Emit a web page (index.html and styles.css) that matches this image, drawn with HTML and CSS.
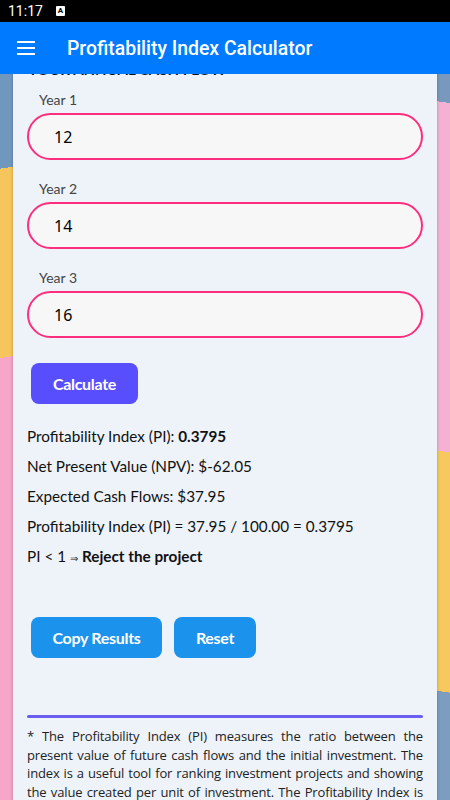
FILE: index.html
```html
<!DOCTYPE html>
<html lang="en">
<head>
  <meta charset="UTF-8">
  <meta name="viewport" content="width=device-width, initial-scale=1.0">
  <title>Profitability Index Calculator</title>
  <link rel="stylesheet" href="styles.css">
</head>
<body>
  <div class="status-bar">
    <span class="clock">11:17</span>
    <span class="status-icon">A</span>
  </div>

  <header class="app-bar">
    <button class="menu-button" title="Menu">
      <span></span><span></span><span></span>
    </button>
    <h1>Profitability Index Calculator</h1>
  </header>

  <main class="screen">
    <div class="card">
      <h2 class="section-title">YOUR ANNUAL CASH FLOW</h2>

      <div class="field">
        <label for="year-1">Year 1</label>
        <input type="text" id="year-1" value="12">
      </div>

      <div class="field">
        <label for="year-2">Year 2</label>
        <input type="text" id="year-2" value="14">
      </div>

      <div class="field">
        <label for="year-3">Year 3</label>
        <input type="text" id="year-3" value="16">
      </div>

      <button class="btn btn-primary" id="calculate">Calculate</button>

      <div class="results">
        <p>Profitability Index (PI): <strong>0.3795</strong></p>
        <p>Net Present Value (NPV): $-62.05</p>
        <p>Expected Cash Flows: $37.95</p>
        <p>Profitability Index (PI) = 37.95 / 100.00 = 0.3795</p>
        <p>PI &lt; 1 <span class="arrow">&rArr;</span> <strong>Reject the project</strong></p>
      </div>

      <div class="actions">
        <button class="btn btn-secondary" id="copy-results">Copy Results</button>
        <button class="btn btn-secondary" id="reset">Reset</button>
      </div>

      <hr class="divider">

      <p class="note">
        * The Profitability Index (PI) measures the ratio between the present value of future
        cash flows and the initial investment. The index is a useful tool for ranking investment
        projects and showing the value created per unit of investment. The Profitability Index is
        also known as the value investment ratio or the profit investment ratio.
      </p>
    </div>
  </main>
</body>
</html>
```

FILE: styles.css
```css
* {
  box-sizing: border-box;
}

html, body {
  margin: 0;
  height: 100%;
}

body {
  font-family: Lato, 'Noto Sans', sans-serif;
  color: #111;
  display: flex;
  flex-direction: column;
  overflow: hidden;
}

.status-bar {
  height: 22px;
  background-color: #000;
  color: #fff;
  display: flex;
  align-items: center;
  gap: 13px;
  padding-left: 8px;
  font-family: Roboto, sans-serif;
  font-size: 14px;
}

.status-icon {
  width: 9px;
  height: 10px;
  background-color: #fff;
  color: #000;
  border-radius: 1px;
  font-size: 8px;
  font-weight: bold;
  line-height: 10px;
  text-align: center;
}

.app-bar {
  height: 52px;
  background-color: #007bff;
  color: #fff;
  display: flex;
  align-items: center;
  padding-left: 17px;
  position: relative;
  z-index: 1;
}

.menu-button {
  background: none;
  border: none;
  padding: 0;
  width: 18px;
  height: 14px;
  display: flex;
  flex-direction: column;
  justify-content: space-between;
  cursor: pointer;
}

.menu-button span {
  display: block;
  height: 2px;
  background-color: #fff;
}

.app-bar h1 {
  margin: 0 0 0 32px;
  font-family: Roboto, sans-serif;
  font-size: 19.4px;
  font-weight: 500;
}

.screen {
  flex: 1;
  overflow: hidden;
  padding: 0 13px;
  background:
    linear-gradient(172deg, #7097be 0 13%, #f6c65c 13% 39%, #f5a6c9 39%) left top / 13px 100% no-repeat,
    linear-gradient(188deg, #7899bd 0 4%, #f5b1d3 4% 52%, #f6c85e 52% 85%, #7c9dc0 85%) right top / 13px 100% no-repeat;
}

.card {
  margin-top: -15px;
  background-color: #eef3fa;
  padding: 0 14px 20px;
  box-shadow: 0 0 3px rgba(0, 0, 0, 0.25);
}

.section-title {
  margin: 0;
  font-size: 15px;
  line-height: 20px;
  font-weight: bold;
  padding-left: 1px;
}

.field {
  margin-top: 12px;
}

.field + .field {
  margin-top: 20px;
}

.field label {
  display: block;
  padding-left: 12px;
  font-size: 14px;
  line-height: 18px;
  color: #444;
  margin-bottom: 4px;
}

.field input {
  display: block;
  width: 100%;
  height: 47px;
  border: 2px solid #ff2d7d;
  border-radius: 24px;
  background-color: #f7f7f7;
  padding: 0 25px;
  font-family: 'Noto Sans', sans-serif;
  font-size: 16px;
  color: #000;
  outline: none;
}

.btn {
  border: none;
  border-radius: 8px;
  color: #fff;
  font-family: Lato, sans-serif;
  font-size: 16px;
  font-weight: bold;
  letter-spacing: -0.3px;
  white-space: nowrap;
  height: 41px;
  cursor: pointer;
}

.btn-primary {
  display: block;
  margin: 25px 0 0 4px;
  width: 107px;
  background-color: #584efd;
}

.results {
  margin-top: 17px;
}

.results p {
  margin: 0;
  font-size: 15.3px;
  line-height: 30px;
}

.results .arrow {
  font-size: 10px;
}

.actions {
  display: flex;
  gap: 12px;
  margin: 44px 0 0 4px;
}

.btn-secondary {
  background-color: #1b92eb;
  padding: 0;
}

#copy-results {
  width: 131px;
}

#reset {
  width: 82px;
}

.divider {
  margin: 57px 0 0;
  border: none;
  height: 3px;
  border-radius: 2px;
  background-color: #6a5ff0;
}

.note {
  margin: 9px 0 0;
  font-family: 'Open Sans', sans-serif;
  font-size: 13px;
  letter-spacing: -0.15px;
  line-height: 18.5px;
  text-align: justify;
  color: #222;
}
```
